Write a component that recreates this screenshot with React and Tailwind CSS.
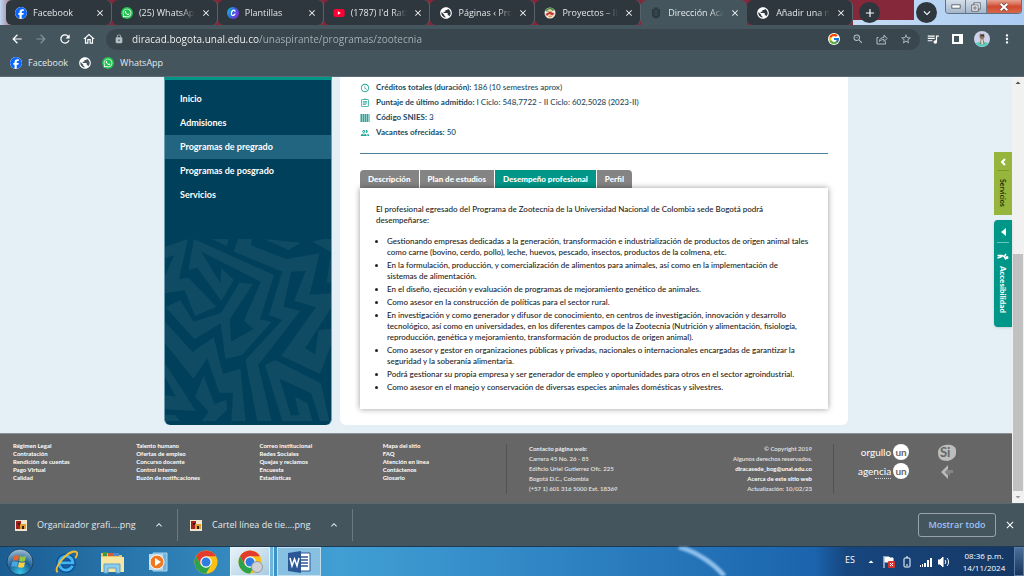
import { useState } from 'react';
import {
  MdArrowBack, MdArrowForward, MdRefresh, MdOutlineHome, MdLock, MdZoomOut, MdStarBorder,
  MdQueueMusic, MdMoreVert, MdClose, MdAdd, MdExpandMore, MdExpandLess, MdArrowDropUp, MdArrowDropDown,
  MdPublic, MdAccessTime, MdOutlineAssignment, MdOutlinePeople,
} from 'react-icons/md';
import { FaFacebook, FaYoutube, FaWhatsapp } from 'react-icons/fa6';
import { FcGoogle } from 'react-icons/fc';

const browserTabs = [
  { label: 'Facebook', icon: 'facebook' },
  { label: '(25) WhatsApp', icon: 'whatsapp' },
  { label: 'Plantillas', icon: 'canva' },
  { label: "(1787) I'd Rath", icon: 'youtube' },
  { label: 'Páginas ‹ Proy', icon: 'globe' },
  { label: 'Proyectos – IEI', icon: 'school' },
  { label: 'Dirección Acac', icon: 'unal', active: true },
  { label: 'Añadir una nu', icon: 'globe' },
];

const menu = ['Inicio', 'Admisiones', 'Programas de pregrado', 'Programas de posgrado', 'Servicios'];

const facts = [
  { icon: 'clock', label: 'Créditos totales (duración):', value: '186 (10 semestres aprox)' },
  { icon: 'clipboard', label: 'Puntaje de último admitido:', value: 'I Ciclo: 548,7722 - II Ciclo: 602,5028 (2023-II)' },
  { icon: 'barcode', label: 'Código SNIES:', value: '3' },
  { icon: 'people', label: 'Vacantes ofrecidas:', value: '50' },
];

const tabs = ['Descripción', 'Plan de estudios', 'Desempeño profesional', 'Perfil'];

const duties = [
  ['Gestionando empresas dedicadas a la generación, transformación e industrialización de productos de origen animal tales', 'como carne (bovino, cerdo, pollo), leche, huevos, pescado, insectos, productos de la colmena, etc.'],
  ['En la formulación, producción, y comercialización de alimentos para animales, así como en la implementación de', 'sistemas de alimentación.'],
  ['En el diseño, ejecución y evaluación de programas de mejoramiento genético de animales.'],
  ['Como asesor en la construcción de políticas para el sector rural.'],
  ['En investigación y como generador y difusor de conocimiento, en centros de investigación, innovación y desarrollo', 'tecnológico, así como en universidades, en los diferentes campos de la Zootecnia (Nutrición y alimentación, fisiología,', 'reproducción, genética y mejoramiento, transformación de productos de origen animal).'],
  ['Como asesor y gestor en organizaciones públicas y privadas, nacionales o internacionales encargadas de garantizar la', 'seguridad y la soberanía alimentaria.'],
  ['Podrá gestionar su propia empresa y ser generador de empleo y oportunidades para otros en el sector agroindustrial.'],
  ['Como asesor en el manejo y conservación de diversas especies animales domésticas y silvestres.'],
];

const footerLinks = [
  ['Régimen Legal', 'Contratación', 'Rendición de cuentas', 'Pago Virtual', 'Calidad'],
  ['Talento humano', 'Ofertas de empleo', 'Concurso docente', 'Control interno', 'Buzón de notificaciones'],
  ['Correo institucional', 'Redes Sociales', 'Quejas y reclamos', 'Encuesta', 'Estadísticas'],
  ['Mapa del sitio', 'FAQ', 'Atención en línea', 'Contáctenos', 'Glosario'],
];

function SiteIcon({ name }) {
  if (name === 'facebook') return <FaFacebook className="w-3 h-3 shrink-0 text-[#0866ff] bg-white rounded-full" />;
  if (name === 'whatsapp') {
    return (
      <span className="w-3 h-3 shrink-0 rounded-full bg-[#1fc34f] flex items-center justify-center">
        <FaWhatsapp className="w-2.5 h-2.5 text-white" />
      </span>
    );
  }
  if (name === 'youtube') {
    return (
      <span className="w-3 h-3 shrink-0 flex items-center justify-center bg-[linear-gradient(white,white)] bg-[length:4px_4px] bg-center bg-no-repeat">
        <FaYoutube className="w-3 h-3 text-[#ff0033]" />
      </span>
    );
  }
  if (name === 'canva') {
    return (
      <svg viewBox="0 0 24 24" className="w-3 h-3 shrink-0">
        <defs>
          <linearGradient id="canva" x1="0" y1="0.3" x2="1" y2="0.8">
            <stop offset="0" stopColor="#12b5d4" />
            <stop offset="0.5" stopColor="#3b5be0" />
            <stop offset="1" stopColor="#8b2be8" />
          </linearGradient>
        </defs>
        <circle cx="12" cy="12" r="12" fill="url(#canva)" />
        <path d="M16 8.500c0-3-3.500-3-5.500-.5C8 11 8 17 11.500 17c2 0 3.500-1 4.500-3" fill="none" stroke="#fff" strokeWidth="2.500" strokeLinecap="round" />
      </svg>
    );
  }
  if (name === 'globe') return <MdPublic className="w-3.5 h-3.5 shrink-0 text-white" />;
  if (name === 'school') {
    return (
      <svg viewBox="0 0 24 24" className="w-3 h-3 shrink-0">
        <circle cx="12" cy="12" r="11" fill="#efe9dc" />
        <path d="M2 8a11 11 0 0 1 19-2l-9 4z" fill="#4d8a45" />
        <path d="M6 7l6-3 5 3-5 3z" fill="#f0d9a8" />
        <path d="M3 14l9-5 9 4-4 4-6-3-5 4z" fill="#c33b35" />
        <path d="M8 19l5-3 4 3-5 2z" fill="#d49a4e" />
      </svg>
    );
  }
  return (
    <svg viewBox="0 0 24 24" className="w-3 h-3 shrink-0" fill="#2c393f">
      <path d="M8 1h8v3h4v13c0 3-4 5-8 6-4-1-8-3-8-6V4h4z" />
      <path d="M8 8h8M8 12h8M8 16h8" stroke="#44555e" strokeWidth="1.500" />
    </svg>
  );
}

function BrowserTab({ tab }) {
  return (
    <div
      className={`flex items-center flex-1 min-w-0 h-[25px] pl-[9px] pr-1.5 gap-1.5 border-r
        ${tab.active ? 'bg-[#44555e] rounded-t-md border-transparent' : 'bg-[#2d373d] rounded-md border-[#56636a]'}`}
    >
      <SiteIcon name={tab.icon} />
      <button className="flex-1 min-w-0 whitespace-nowrap text-left text-[9px] leading-3 text-[#e3e8ea] mask-r-from-75%">
        {tab.label}
      </button>
      <button aria-label="Cerrar pestaña" className="text-white shrink-0">
        <MdClose className="w-2.5 h-2.5" />
      </button>
    </div>
  );
}

function TabStrip() {
  return (
    <div className="flex h-[25px] shrink-0 bg-linear-to-r from-[#bcd6f2] from-0% via-[#852739] via-2% to-[#852739] pl-1.5">
      <div className="flex flex-1 min-w-0">
        {browserTabs.map((tab, i) => <BrowserTab key={i} tab={tab} />)}
      </div>
      <div className="flex w-[171px] shrink-0 items-start bg-linear-to-r from-[#c5dcf5] to-[#abccf2]">
        <div className="w-[61px] h-5 bg-[#85283a] pl-1.5 pt-0.5">
          <button aria-label="Nueva pestaña" className="w-[21px] h-[21px] rounded-full bg-[#2d373d] text-white flex items-center justify-center">
            <MdAdd className="w-3.5 h-3.5" />
          </button>
        </div>
        <button aria-label="Buscar pestañas" className="w-[21px] h-[21px] mt-0.5 ml-0.5 rounded-full bg-[#2d373d] text-white flex items-center justify-center">
          <MdExpandMore className="w-3.5 h-3.5" />
        </button>
        <div className="flex ml-auto mr-0.5 h-3.5 border border-t-0 border-[#5f7186] rounded-b overflow-hidden">
          <button aria-label="Minimizar" className="w-5 bg-linear-to-b from-[#d5dfeb] to-[#a5b5c8] flex items-center justify-center border-r border-[#6d7f94]">
            <svg viewBox="0 0 12 6" className="w-2.5 h-[5px]"><rect x="1" y="1" width="10" height="4" fill="#fff" stroke="#4c5563" /></svg>
          </button>
          <button aria-label="Restaurar" className="w-[21px] bg-linear-to-b from-[#d5dfeb] to-[#a5b5c8] flex items-center justify-center border-r border-[#6d7f94]">
            <svg viewBox="0 0 12 12" className="w-2.5 h-2.5" fill="#fff" stroke="#4c5563">
              <rect x="3.500" y="1" width="7.500" height="7.500" />
              <rect x="1" y="3.500" width="7.500" height="7.500" />
              <rect x="3.500" y="6" width="2.500" height="2.500" />
            </svg>
          </button>
          <button aria-label="Cerrar" className="w-[34px] bg-linear-to-b from-[#e6a392] via-[#cf4a30] to-[#d9674a] flex items-center justify-center">
            <svg viewBox="0 0 12 12" className="w-2.5 h-2.5">
              <path d="M2 2l8 8M10 2l-8 8" stroke="#5c3a3a" strokeWidth="4" />
              <path d="M2 2l8 8M10 2l-8 8" stroke="#fff" strokeWidth="2.500" />
            </svg>
          </button>
        </div>
      </div>
    </div>
  );
}

function Toolbar() {
  return (
    <div className="flex items-center h-7 shrink-0 bg-[#44555e] px-2.5 gap-2.5 text-white">
      <button aria-label="Atrás"><MdArrowBack className="w-3.5 h-3.5" /></button>
      <button aria-label="Adelante" className="text-[#83919a]"><MdArrowForward className="w-3.5 h-3.5" /></button>
      <button aria-label="Recargar"><MdRefresh className="w-3.5 h-3.5" /></button>
      <button aria-label="Inicio"><MdOutlineHome className="w-3.5 h-3.5" /></button>
      <div className="flex items-center flex-1 h-[21px] rounded-full bg-[#3a464d] pl-2 pr-2 -mr-1 gap-3 text-[#b4bec3]">
        <MdLock className="w-2.5 h-2.5 shrink-0 -mr-1" />
        <input
          type="text"
          aria-label="Dirección"
          defaultValue="diracad.bogota.unal.edu.co/unaspirante/programas/zootecnia"
          className="flex-1 min-w-0 text-[10px] leading-4 text-transparent bg-clip-text bg-linear-to-r from-white from-[127px] to-[#a9b3b8] to-[127px] outline-none"
        />
        <FcGoogle className="w-3 h-3 bg-white rounded-full" />
        <button aria-label="Zoom"><MdZoomOut className="w-3 h-3" /></button>
        <button aria-label="Compartir">
          <svg viewBox="0 0 24 24" className="w-3 h-3" fill="none" stroke="currentColor" strokeWidth="2">
            <path d="M5 9H2v13h17v-5" />
            <path d="M7 17c0-6 4-8 9-8V4l6 7-6 6v-4c-4 0-7 1-9 4z" />
          </svg>
        </button>
        <button aria-label="Marcador"><MdStarBorder className="w-3 h-3" /></button>
      </div>
      <button aria-label="Controlar multimedia"><MdQueueMusic className="w-3.5 h-3.5" /></button>
      <button aria-label="Panel lateral" className="w-3.5 flex justify-center">
        <span className="w-[11px] h-2.5 border-2 border-r-4 border-white" />
      </button>
      <button aria-label="Perfil">
        <svg viewBox="0 0 24 24" className="w-4 h-4">
          <circle cx="12" cy="12" r="12" fill="#cfd0ea" />
          <path d="M2 18c6-2 14-2 20 0a12 12 0 0 1-20 0z" fill="#4fd0c4" />
          <path d="M9 3l2 3h3l1-3 1 6-2 3 2 8H9l1-8-2-3z" fill="#8a7763" />
          <path d="M10 5h5v3h-5z" fill="#40372f" />
          <path d="M11 12l2 1 1 7h-3z" fill="#e8dcc8" />
        </svg>
      </button>
      <button aria-label="Más"><MdMoreVert className="w-3.5 h-3.5" /></button>
    </div>
  );
}

function Bookmarks() {
  return (
    <nav className="flex items-center h-6 shrink-0 bg-[#44555e] pb-1 pl-2.5 text-[9px] leading-3 text-[#e3e8ea] border-b border-[#5b6a72]">
      <a href="#facebook" className="flex items-center gap-1.5"><SiteIcon name="facebook" />Facebook</a>
      <a href="#web" aria-label="Web" className="ml-2.5"><SiteIcon name="globe" /></a>
      <a href="#whatsapp" className="flex items-center gap-1.5 ml-2.5"><SiteIcon name="whatsapp" />WhatsApp</a>
    </nav>
  );
}

function Pattern() {
  return (
    <svg viewBox="10 27 495 546" className="w-full h-[182px]" preserveAspectRatio="none" fill="#104b64">
      <path fillRule="evenodd" d="M10 50L78 27 52 147 80 143 163 230 100 258 68 181 10 190ZM10 85L38 75 10 137Z" />
      <path d="M96 27L335 135 293 268 328 275 240 375 190 387 176 280 98 328 12 232 55 210 95 275 178 248 232 158 272 162 203 268 207 335 274 297 245 272 296 155 118 65 175 160 178 115 215 150 178 212 106 113 80 120Z" />
      <path d="M228 27L215 65 360 125 320 255 360 270 250 390 285 573 328 573 288 405 413 243 363 230 386 125 430 123 395 212 460 232 357 377 472 432 505 345 505 297 468 300 457 373 428 355 505 235 505 190 441 194 471 70 373 87 266 46 270 27Z" />
      <path d="M308 405L338 390 475 460 500 573 472 573 446 490 352 446 385 556 410 556 398 500 435 520 450 573 360 573Z" />
      <path d="M10 275L92 366 155 322 183 432 235 416 250 573 208 573 213 488 172 488 136 385 95 446 10 340Z" />
      <path fillRule="evenodd" d="M10 400L102 543 10 538ZM10 440L42 500 10 495Z" />
      <path d="M125 437L158 523 193 510 195 540 160 573 120 573 140 545 100 500Z" />
      <path d="M305 27L415 38 378 60ZM150 27L200 27 194 48ZM450 35L480 27H505V67ZM492 158L503 80H505V158ZM10 555H40L55 573H10Z" />
    </svg>
  );
}

function FactIcon({ name }) {
  const cls = 'w-2.5 h-2.5 shrink-0 text-[#24a596]';
  if (name === 'clock') return <MdAccessTime className={cls} />;
  if (name === 'clipboard') return <MdOutlineAssignment className={cls} />;
  if (name === 'people') return <MdOutlinePeople className={cls} />;
  return (
    <svg viewBox="0 0 20 18" className={cls} fill="currentColor">
      <path d="M1 1h4v16H1zM6 1h2v16H6zM9 1h4v16H9zM14 1h2v16h-2zM17 1h2v16h-2z" />
    </svg>
  );
}

function UnBadge({ word, small }) {
  return (
    <a href={`#${word}`} className="flex items-center gap-0.5 text-[10px] leading-4 text-white">
      <span className="relative">
        {word}
        {small && <span className="absolute right-0 bottom-0 w-4 border-b border-dotted border-gray-300" />}
      </span>
      <span className="w-4 h-4 rounded-full bg-white text-[#666] font-bold text-[10px] leading-4 flex justify-center">un</span>
    </a>
  );
}

function PageFooter() {
  return (
    <footer className="flex h-[70px] shrink-0 bg-[#666] border-t border-[#8a9094] text-white text-[6px]">
      <div className="flex w-1/2 mt-2 pl-[13px]">
        {footerLinks.map((col, i) => (
          <ul key={i} className="w-1/4 font-bold leading-2">
            {col.map((item) => <li key={item}><a href="#enlace">{item}</a></li>)}
          </ul>
        ))}
      </div>
      <div className="flex flex-1 justify-between h-[50px] mt-2.5 pl-[22px] pr-[21px] border-x border-[#525252] leading-[10px] font-semibold text-[#e4e4e4]">
        <address className="not-italic">
          <strong>Contacto página web:</strong><br />
          Carrera 45 No. 26 - 85<br />
          Edificio Uriel Gutierrez Ofc. 225<br />
          Bogotá D.C., Colombia<br />
          (+57 1) 601 316 5000 Ext. 18369
        </address>
        <div className="text-right">
          © Copyright 2019<br />
          Algunos derechos reservados.<br />
          <a href="#correo" className="font-bold text-white">diracasede_bog@unal.edu.co</a><br />
          <a href="#acerca" className="font-bold text-white">Acerca de este sitio web</a><br />
          Actualización: 10/02/23
        </div>
      </div>
      <div className="w-[178px] flex pl-6 gap-7 pt-2.5">
        <div className="flex flex-col items-end gap-[3px]">
          <UnBadge word="orgullo" />
          <UnBadge word="agencia" small />
        </div>
        <div className="flex flex-col items-center gap-0.5">
          <svg viewBox="0 0 20 18" className="w-5 h-[18px]">
            <path d="M1 8C1-1 20-2 19 7c1 7-5 9-8 10C3 17 1 14 1 8z" fill="#bdbdbd" />
            <text x="3" y="13" fontSize="13" fontWeight="bold" fill="#666">Si</text>
          </svg>
          <svg viewBox="0 0 14 16" className="w-3.5 h-4">
            <path d="M8 1L1 8l7 7V11L5 8l3-3z" fill="#b8b8b8" />
            <path d="M7 6h6v3h-3v3L6 8z" fill="#858585" />
          </svg>
        </div>
      </div>
    </footer>
  );
}

function Page() {
  const [current, setCurrent] = useState('Desempeño profesional');
  return (
    <div className="relative flex flex-col flex-1 min-w-0 bg-[#e4eff6] font-[Lato,sans-serif]">
      <div className="flex flex-1 w-full max-w-[684px] mx-auto gap-2 mb-2">
        <aside className="w-[168px] shrink-0 flex flex-col bg-[#00405a] border-t-3 border-t-[#009688] border-x border-x-[#6f9db1] rounded-b-md overflow-hidden">
          <nav className="pt-[7px] text-[9px] font-bold text-white">
            {menu.map((item) => (
              <a
                key={item}
                href="#menu"
                className={`block px-[15px] leading-6 ${item === 'Programas de pregrado' ? 'bg-[#226580]' : ''}`}
              >
                {item}
              </a>
            ))}
          </nav>
          <div className="mt-auto pb-1"><Pattern /></div>
        </aside>

        <main className="flex-1 bg-white rounded-b-md px-5 pt-[3px] pb-4 flex flex-col">
          <ul className="text-[8px] leading-[15px] text-[#1b4a62] font-medium">
            {facts.map((fact) => (
              <li key={fact.label} className="flex items-center gap-1.5">
                <FactIcon name={fact.icon} />
                <span><strong>{fact.label}</strong> {fact.value}</span>
              </li>
            ))}
          </ul>
          <div role="separator" className="mt-[13px] h-px bg-[#4c7f98]" />
          <div role="tablist" className="flex gap-px mt-4 text-[8px] leading-[18px] font-black text-white">
            {tabs.map((tab) => (
              <button
                key={tab}
                role="tab"
                aria-selected={tab === current}
                onClick={() => setCurrent(tab)}
                className={`px-2 first:rounded-tl-sm last:rounded-tr-sm ${tab === current ? 'bg-[#009688]' : 'bg-[#848484]'}`}
              >
                {tab}
              </button>
            ))}
          </div>
          <section className="flex-1 bg-white shadow-[0_0_6px_rgba(0,0,0,0.4)] px-4 pt-4 text-[8px] leading-[11px] font-medium text-[#222] whitespace-nowrap">
            <p>
              El profesional egresado del Programa de Zootecnia de la Universidad Nacional de Colombia sede Bogotá podrá<br />
              desempeñarse:
            </p>
            <ul className="list-disc pl-[11px] mt-2.5 space-y-0.5">
              {duties.map((lines) => (
                <li key={lines[0]}>
                  {lines.map((line) => <span key={line} className="block first:inline">{line}</span>)}
                </li>
              ))}
            </ul>
          </section>
        </main>
      </div>
      <PageFooter />

      {/* pestañas flotantes */}
      <div className="absolute right-0 top-[75px] w-[18px] flex flex-col gap-[5px]">
        <button className="h-[63px] bg-[#95b53c] flex flex-col items-center pt-1.5 gap-1 text-[7px] font-bold text-[#26330a]">
          <svg viewBox="0 0 6 8" className="w-1.5 h-2" fill="none" stroke="#fff" strokeWidth="2"><path d="M5 1L2 4l3 3" /></svg>
          <span className="w-3 border-t border-[#7d9a2c]" />
          <span className="[writing-mode:vertical-rl] leading-3 mt-1">Servicios</span>
        </button>
        <button className="h-[107px] bg-[#009688] rounded-l-sm shadow flex flex-col items-center pt-2 gap-1.5 text-[8px] font-black text-white">
          <svg viewBox="0 0 6 8" className="w-1.5 h-2" fill="#fff"><path d="M6 0L1 4l5 4z" /></svg>
          <span className="w-3 border-t border-[#6cc3ba]" />
          <svg viewBox="0 0 24 14" className="w-3 h-[7px] mt-1" fill="none" stroke="#fff" strokeWidth="3">
            <circle cx="20" cy="9" r="1.500" />
            <path d="M1 5h9l6 3M1 10l9-3M14 8l4-6M15 8l3 5" />
          </svg>
          <span className="[writing-mode:vertical-rl] leading-3">Accesibilidad</span>
        </button>
      </div>
    </div>
  );
}

function Scrollbar() {
  return (
    <div className="w-3 shrink-0 flex flex-col items-center bg-[#f1f1f1] text-[#505050]">
      <MdArrowDropUp className="w-3 h-3 shrink-0" />
      <div className="flex-1 w-full flex flex-col px-px">
        <div className="basis-[41%]" />
        <div className="flex-1 bg-[#c1c1c1]" />
      </div>
      <MdArrowDropDown className="w-3 h-3 shrink-0 text-[#999]" />
    </div>
  );
}

function Download({ name }) {
  return (
    <div className="flex items-center h-8 px-3 border-r border-[#6b7980] text-[9px] leading-3 text-[#e3e8ea]">
      <svg viewBox="0 0 12 11" className="w-3 h-[11px] mr-2.5">
        <rect width="12" height="11" fill="#f3e6d0" />
        <path d="M1 1h5v8H1z" fill="#a3201c" />
        <path d="M5 4h6v5H5z" fill="#e0a030" />
        <path d="M7 6h2v3H7zM3 3h2v2H3z" fill="#3a1d10" />
      </svg>
      <button className="w-[116px] text-left whitespace-nowrap">{name}</button>
      <button aria-label="Opciones"><MdExpandLess className="w-3 h-3" /></button>
    </div>
  );
}

function Downloads() {
  return (
    <div className="flex items-center h-[43px] shrink-0 bg-[#44555e] border-t border-[#59686f] pl-[3px] pr-2">
      <Download name="Organizador grafi....png" />
      <Download name="Cartel línea de tie....png" />
      <button className="ml-auto mr-2 w-[78px] h-6 rounded-[3px] border border-[#98a4aa] text-[9px] font-semibold text-[#9cc3fb]">Mostrar todo</button>
      <button aria-label="Cerrar" className="text-white"><MdClose className="w-3 h-3" /></button>
    </div>
  );
}

function ChromeLogo() {
  return (
    <svg viewBox="0 0 48 48" className="w-6 h-6">
      <circle cx="24" cy="24" r="23" fill="#fbc116" />
      <path d="M4.100 12.500A23 23 0 0 1 43.900 12.500H24L14 30z" fill="#e33b2e" />
      <path d="M4.100 12.500A23 23 0 0 0 24 47L34 29.800 24 35 14 29.800z" fill="#2ba24c" />
      <circle cx="24" cy="24" r="11.500" fill="#fff" />
      <circle cx="24" cy="24" r="9" fill="#2f7de1" />
    </svg>
  );
}

function Taskbar() {
  return (
    <div className="flex items-center h-[30px] shrink-0 border-t border-[#1d3a52] bg-linear-to-r from-[#1a5d93] via-[#419fd4] via-33% to-[#1a62ac] to-81% text-white">
      <div className="flex items-center h-full">
        <button aria-label="Inicio" className="w-10 flex justify-center">
          <svg viewBox="0 0 28 28" className="w-7 h-7">
            <defs>
              <radialGradient id="orb" cx="0.5" cy="0.9" r="0.9">
                <stop offset="0" stopColor="#35c4e8" />
                <stop offset="0.5" stopColor="#1c5f94" />
                <stop offset="1" stopColor="#a9c3d8" />
              </radialGradient>
            </defs>
            <circle cx="14" cy="14" r="13" fill="url(#orb)" stroke="#1b4565" />
            <path d="M8 8c2-1 4-1 5 0l-1 5c-2-1-3-1-5 0z" fill="#ea6430" />
            <path d="M14 8c2 1 4 1 6 0l-1 5c-2 1-4 1-6 0z" fill="#93c83e" />
            <path d="M6 14c2-1 4-1 6 0l-1 5c-2-1-4-1-6 0z" fill="#4aa6e0" />
            <path d="M13 14c2 1 4 1 6 0l-1 5c-2 1-4 1-6 0z" fill="#fbd045" />
          </svg>
        </button>
        <button aria-label="Internet Explorer" className="w-[52px] flex justify-center">
          <svg viewBox="0 0 26 26" className="w-6 h-6" fill="none">
            <path d="M20 17a7.500 7.500 0 1 1 .5-3H7" stroke="#0c4f9a" strokeWidth="6" />
            <path d="M20 17a7.500 7.500 0 1 1 .5-3H7" stroke="#42b4ee" strokeWidth="3" />
            <path d="M4 24C-2 20 16-1 24 2c2 1 1 4-1 7" stroke="#f3bd2e" strokeWidth="2" />
          </svg>
        </button>
        <button aria-label="Explorador" className="w-10 flex justify-center">
          <svg viewBox="0 0 26 24" className="w-[26px] h-6">
            <path d="M2 3h9l2 2h10v17H2z" fill="#e9c767" />
            <path d="M4 2h4v4H4z" fill="#3b9a3f" />
            <path d="M9 3h5v3H9z" fill="#d55a3a" />
            <path d="M14 3h6v3h-6z" fill="#4b8bd0" />
            <path d="M2 7h23v15H2z" fill="#f8e6a0" />
            <path d="M5 23v-9h16v9h-4v-5H9v5z" fill="#8fcbea" stroke="#5aa4cf" />
          </svg>
        </button>
        <button aria-label="Reproductor" className="w-[54px] flex justify-center">
          <svg viewBox="0 0 22 20" className="w-[22px] h-5">
            <path d="M5 1h14v18H5z" fill="#75b5dc" stroke="#a9d3ec" />
            <path d="M1 2h14v16H1z" fill="#b7dbf0" />
            <circle cx="9" cy="10" r="7" fill="#f07820" stroke="#fff" />
            <path d="M7 6l6 4-6 4z" fill="#fff" />
          </svg>
        </button>
        <button aria-label="Chrome" className="w-10 mr-1 flex justify-center"><ChromeLogo /></button>
        <button aria-label="Chrome abierto" className="relative w-10 h-full flex items-center justify-center bg-linear-to-br from-[#e8f2f8] to-[#a8cde3] border border-[#e6f3fa]">
          <ChromeLogo />
          <span className="absolute right-1.5 bottom-0.5 w-3 h-3 rounded-full bg-[#cfd0d8] border border-[#8e9b9b]" />
        </button>
        <span className="w-1 h-full border-r border-[#c9e4f2] bg-[#6fb4d9] mr-[3px]" />
        <button aria-label="Word" className="w-11 h-full flex items-center justify-center bg-[#87c0e0] border border-[#c3e0f0]">
          <svg viewBox="0 0 24 24" className="w-6 h-6">
            <path d="M12 3h11v18H12z" fill="#fff" stroke="#2b5797" />
            <path d="M14 7h7M14 10h7M14 13h7M14 16h7" stroke="#2b5797" strokeWidth="1.500" />
            <path d="M1 3l13-2v22L1 21z" fill="#2b5797" />
            <path d="M3 8l2 8 2.500-7L10 16l2-8" fill="none" stroke="#fff" strokeWidth="1.500" />
          </svg>
        </button>
      </div>
      {/* destello del fondo */}
      <svg viewBox="0 0 60 30" className="w-[60px] h-full ml-auto blur-[1px]" fill="none">
        <path d="M3 0C22 5 40 18 50 30" stroke="#8fc0ec" strokeWidth="5" />
      </svg>
      <div className="flex items-center h-full ml-20 pl-[30px] bg-linear-to-r from-transparent via-[#17467f] via-15% to-[#153763] text-[8px] leading-3">
        <span className="mr-2.5 pb-1 text-[9px]">ES</span>
        <MdArrowDropUp className="w-3 h-3 mr-1.5" />
        <svg viewBox="0 0 12 12" className="w-3 h-3 mr-2">
          <path d="M1 0v12M2 1h4l1 1h3v5H7L6 6H2z" fill="#fff" stroke="#fff" />
          <rect x="5" y="5" width="7" height="7" rx="1" fill="#d8322c" />
          <path d="M7 7l3 3M10 7l-3 3" stroke="#fff" />
        </svg>
        <svg viewBox="0 0 8 12" className="w-2 h-3 mr-[9px]" fill="none" stroke="#fff">
          <rect x="1" y="2" width="6" height="9" rx="1" />
          <path d="M3 1h2M3 9h2" />
        </svg>
        <svg viewBox="0 0 12 10" className="w-3 h-2.5 mr-1.5" fill="#fff">
          <path d="M0 8h1v2H0zM2 7h1v3H2zM4 6h2v4H4zM7 3h2v7H7zM10 1h2v9h-2z" />
        </svg>
        <svg viewBox="0 0 12 12" className="w-3 h-3 mr-3" fill="none" stroke="#fff">
          <path d="M0 4h2l3-3v10L2 8H0z" fill="#fff" />
          <path d="M7 4c1 1 1 3 0 4M9 2c2 2 2 6 0 8" />
        </svg>
        <div className="w-11 text-center mr-2 whitespace-nowrap">08:36 p.m.<br />14/11/2024</div>
        <button aria-label="Mostrar escritorio" className="w-2.5 h-full border border-[#5c7da3] bg-linear-to-b from-[#4a6f99] to-[#1a355c]" />
      </div>
    </div>
  );
}

export default function App() {
  return (
    <div className="h-screen flex flex-col overflow-hidden font-['Open_Sans','Noto_Sans',sans-serif]">
      <TabStrip />
      <Toolbar />
      <Bookmarks />
      <div className="flex flex-1 min-h-0">
        <Page />
        <Scrollbar />
      </div>
      <Downloads />
      <Taskbar />
    </div>
  );
}
